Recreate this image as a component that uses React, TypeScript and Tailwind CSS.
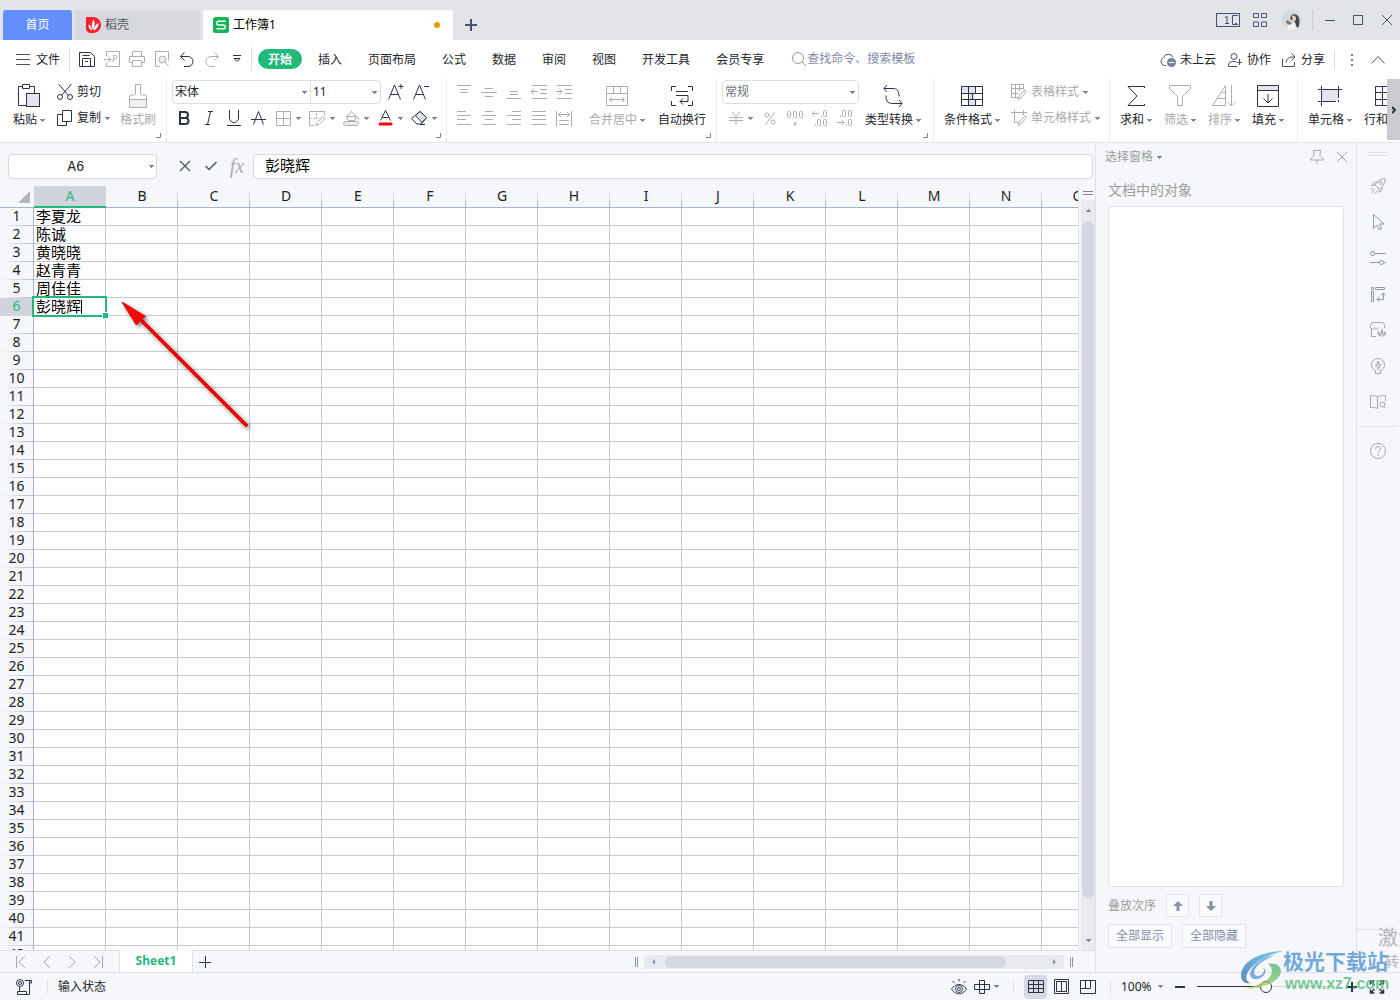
import React from "react";

const INK = "#2b3347";
const OFF = "#adadad";

type Kids = { children?: React.ReactNode };

function Svg({ w, h, c = INK, sw = 1, children, className = "" }: Kids & { w: number; h: number; c?: string; sw?: number; className?: string }) {
  return (
    <svg width={w} height={h} viewBox={`0 0 ${w} ${h}`} fill="none" stroke={c} strokeWidth={sw} className={`shrink-0 ${className}`} aria-hidden="true">
      {children}
    </svg>
  );
}

function Caret({ up = false }: { up?: boolean }) {
  return (
    <svg width="5" height="3" viewBox="0 0 5 3" shapeRendering="crispEdges" className="shrink-0" aria-hidden="true">
      <path d={up ? "M2 0h1v1H2zM1 1h3v1H1zM0 2h5v1H0z" : "M0 0h5v1H0zM1 1h3v1H1zM2 2h1v1H2z"} fill="#7b879f" />
    </svg>
  );
}

/* ---------- title bar ---------- */

function TitleBar() {
  return (
    <header className="flex h-10 shrink-0 bg-[#e3e4e8]">
      <nav className="flex items-end gap-[3px] pl-[3px]" aria-label="窗口标签">
        <button className="h-[30px] w-[69px] rounded-t-[3px] bg-[#628ffc] text-white">首页</button>
        <button className="flex h-[30px] w-[125px] items-center gap-1 rounded-t-[3px] bg-[#d8d9dd] pl-[11px] text-[#50545c]">
          <Svg w={15} h={16} c="none">
            <path d="M0 0h7a8 8 0 0 1 0 16H3L0 13z" fill="#f5222d" />
            <path d="M7.500 2.500c1.800 3 1.500 7-.5 10.500-1.800-3-1.800-7 .5-10.500zM2.500 7.500c2 .8 3.200 3 3.500 6C3.500 12.500 2.300 10.500 2.500 7.500zM12.500 6c.2 3.500-1.300 6-4.700 7.500C8 10 9.500 7.500 12.500 6z" fill="#fff" />
          </Svg>
          稻壳
        </button>
        <button className="flex h-[30px] w-[250px] items-center gap-1 rounded-t-[3px] bg-white pr-[13px] pl-[10px] text-black">
          <Svg w={16} h={16} c="#fff" sw={1.5}>
            <rect width="16" height="16" rx="2.500" fill="#14b755" stroke="none" />
            <path d="M12.500 4.300H5.200C3.300 4.300 3.300 8 5.200 8h5.600c1.900 0 1.900 3.800 0 3.800H3.500" />
          </Svg>
          <span className="flex-1 text-left">工作簿1</span>
          <span className="size-1.5 rounded-full bg-[#e69a0c]" />
        </button>
        <button className="flex h-[30px] w-[30px] items-center justify-center" aria-label="新建标签">
          <Svg w={12} h={12} c="#47536d" sw={2}><path d="M6 0v12M0 6h12" /></Svg>
        </button>
      </nav>
      <div className="ml-auto flex items-center pr-2">
        <button aria-label="窗口布局" className="mr-[13px]">
          <Svg w={24} h={14} c="#47536d"><rect x=".5" y=".5" width="23" height="13" /><path d="M9 4.500l2-1V11M9 10.500h4M22 2.500h-5.500v9H22M19 10.500h2" /></Svg>
        </button>
        <button aria-label="应用" className="mr-[15px]">
          <Svg w={14} h={14} c="#47536d"><path d="M.5.500h5v4h-5zM8.500.500h5v4h-5zM.5 9h5v4.500h-5zM8.500 9h5v4.500h-5z" /></Svg>
        </button>
        <button aria-label="账户" className="mr-[10px]">
          <Svg w={20} h={20} c="none">
            <circle cx="10" cy="10" r="10" fill="#cfdbe0" />
            <path d="M9 6c2-3 7-2 8 2 .8 4 .3 7-1 10-2-1-2-4-3-6L8 9z" fill="#45444c" />
            <path d="M10 6c2-1 4 0 4 2.500S12 12 10.500 11z" fill="#e6cbbd" />
            <path d="M5 19c0-4 3-6 7-6l2 5c-2 2-6 2.500-9 1z" fill="#f6f1f1" />
            <path d="M5 10l5 3-2 2-4-2z" fill="#8b6f70" />
          </Svg>
        </button>
        <span className="h-5 w-px bg-[#cdced3]" />
        <button aria-label="最小化" className="ml-3"><Svg w={10} h={10} c="#47536d"><path d="M0 5.500h10" /></Svg></button>
        <button aria-label="最大化" className="ml-[18px]"><Svg w={10} h={10} c="#47536d"><rect x=".5" y=".5" width="9" height="9" /></Svg></button>
        <button aria-label="关闭" className="ml-[19px]"><Svg w={10} h={10} c="#47536d"><path d="M0 0l10 10M10 0L0 10" /></Svg></button>
      </div>
    </header>
  );
}

/* ---------- menu bar ---------- */

function QuickIcon({ label, children }: Kids & { label: string }) {
  return <button aria-label={label} className="flex h-6 w-[25px] items-center justify-center">{children}</button>;
}

function MenuBar() {
  const tabs = ["插入", "页面布局", "公式", "数据", "审阅", "视图", "开发工具", "会员专享"];
  return (
    <div className="flex h-[38px] shrink-0 items-center bg-white text-[#24262b]">
      <button className="ml-4 flex items-center gap-1.5 pt-0.5">
        <Svg w={14} h={12} c="#4a5060"><path d="M0 .500h14M0 5.500h14M0 10.500h14" /></Svg>
        文件
      </button>
      <span className="mr-1 ml-[9px] h-6 w-px bg-[#dcdde1]" />
      <QuickIcon label="保存">
        <Svg w={16} h={15}><path d="M.5.500h11l4 4v10h-15zM3.500 14.500v-8h8v8M3.500 3.500h7M6 9.500h3" /></Svg>
      </QuickIcon>
      <QuickIcon label="输出为PDF">
        <Svg w={16} h={16} c={OFF}><path d="M2.500 5V.500h13v15h-13V12M0 8.500h7M4 5.500l3 3-3 3M8 11c2-1 1.500-4 1.500-6.500h2c2 0 2 3.500-.5 3.500H9" /></Svg>
      </QuickIcon>
      <QuickIcon label="打印">
        <Svg w={16} h={16} c={OFF}><path d="M3.500 5V.500h9V5M3.500 11.500h-3v-6h15v6h-3M3.500 9.500h9v6h-9z" /></Svg>
      </QuickIcon>
      <QuickIcon label="打印预览">
        <Svg w={16} h={16} c={OFF}><path d="M6 15.500H1.500V.500h13v9" /><circle cx="8.500" cy="8.500" r="3.500" fill="#ececec" /><path d="M11 11l4 4.500" /></Svg>
      </QuickIcon>
      <QuickIcon label="撤销">
        <Svg w={14} h={15}><path d="M4.500.500l-4 4 4 4M.500 4.500H8a5 5 0 0 1 0 10H4" /></Svg>
      </QuickIcon>
      <QuickIcon label="恢复">
        <Svg w={14} h={15} c={OFF}><path d="M9.500.500l4 4-4 4M13.500 4.500H6a5 5 0 0 0 0 10h4" /></Svg>
      </QuickIcon>
      <QuickIcon label="更多">
        <Svg w={8} h={8}><path d="M0 .500h8M1 3.500h6l-3 3z" /></Svg>
      </QuickIcon>
      <span className="mr-1.5 ml-0.5 h-6 w-px bg-[#dcdde1]" />
      <button className="h-5 w-11 rounded-full bg-[#21b97c] leading-[22px] font-bold text-white">开始</button>
      <nav className="ml-4 flex gap-[26px] pt-0.5" aria-label="功能区">
        {tabs.map((t) => <button key={t} className="whitespace-nowrap">{t}</button>)}
      </nav>
      <label className="ml-7 flex items-center gap-px">
        <Svg w={14} h={14} c="#8e98b4"><circle cx="6" cy="6" r="5.500" /><path d="M10 10l4 4" /></Svg>
        <input aria-label="搜索" placeholder="查找命令、搜索模板" className="w-28 bg-transparent outline-none placeholder:text-[#7f89a6]" />
      </label>
      <div className="ml-auto flex items-center whitespace-nowrap pt-0.5">
        <button className="flex items-center gap-1">
          <Svg w={16} h={14} c="#4a5468"><path d="M6 12.500H4.500a4 4 0 0 1-1-7.700 5 5 0 0 1 9.500-.3" /><circle cx="11.500" cy="9.500" r="4.500" fill="#77809a" stroke="none" /><path d="M9 9.500h5" stroke="#fff" /></Svg>
          未上云
        </button>
        <button className="ml-3 flex items-center gap-[5px]">
          <Svg w={14} h={14} c="#4a5468"><circle cx="6" cy="3.500" r="3" /><path d="M8 8.500H4a3.500 3.500 0 0 0-3.500 3.500v1.500H9M11.500 6v6M8.500 9.500h5.500" /></Svg>
          协作
        </button>
        <button className="ml-[11px] flex items-center gap-[5px]">
          <Svg w={14} h={14} c="#4a5468"><path d="M.5 6v7.500h12V9M9.500.500l3.500 3.500-3.500 3.500M13 4h-3C6.500 4 4.500 6 4 9.500" /></Svg>
          分享
        </button>
        <span className="ml-[9px] h-5 w-px bg-[#dcdde1]" />
        <button aria-label="更多" className="ml-4"><Svg w={2} h={12} c="none"><path d="M0 0h2v2H0zM0 5h2v2H0zM0 10h2v2H0z" fill="#737b8e" /></Svg></button>
        <button aria-label="折叠" className="mr-[15px] ml-[18px]"><Svg w={14} h={8} c="#4a5468"><path d="M.5 7.500l6.500-7 6.500 7" /></Svg></button>
      </div>
    </div>
  );
}

/* ---------- ribbon ---------- */

function Group({ children, className, mark = false, bar = true }: Kids & { className: string; mark?: boolean; bar?: boolean }) {
  return (
    <div className={`flex shrink-0 flex-col pt-0.5 ${bar ? "border-r border-[#ebecef]" : ""} ${className}`}>
      <div className="flex h-[52px]">{children}</div>
      {mark && (
        <button aria-label="对话框启动器" className="mr-[5px] mt-px self-end">
          <Svg w={5} h={5} c="#7b879f"><path d="M0 4.500h4.500V0" /></Svg>
        </button>
      )}
    </div>
  );
}

function Big({ label, icon, off = false, caret = true, className = "" }: { label: string; icon: React.ReactNode; off?: boolean; caret?: boolean; className?: string }) {
  return (
    <button className={`flex shrink-0 flex-col items-center ${off ? "text-[#a9a9a9]" : "text-[#24262b]"} ${className}`}>
      <span className="flex h-8 items-center">{icon}</span>
      <span className="flex items-center gap-[3px] leading-4 whitespace-nowrap">{label}{caret && <Caret />}</span>
    </button>
  );
}

function Tool({ label, children, caret = false }: Kids & { label: string; caret?: boolean }) {
  return (
    <button aria-label={label} className="flex h-6 items-center">
      <span className="flex w-[25px] justify-center">{children}</span>
      {caret && <span className="flex w-[9px]"><Caret /></span>}
    </button>
  );
}

function Lines({ rows }: { rows: [number, number, number][] }) {
  return <Svg w={16} h={14} c={OFF}>{rows.map(([x, y, l], i) => <path key={i} d={`M${x} ${y + 0.5}h${l}`} />)}</Svg>;
}

function Picker({ label, value, className }: { label: string; value: string; className: string }) {
  return (
    <label className={`flex h-6 items-center border border-[#dcdee3] bg-white pr-[3px] ${className}`}>
      <select aria-label={label} className="h-full min-w-0 flex-1 appearance-none bg-transparent px-0.5 outline-none">
        <option>{value}</option>
      </select>
      <Caret />
    </label>
  );
}

function Ribbon() {
  return (
    <div className="flex h-16 shrink-0 bg-white">
      <div className="flex min-w-0 flex-1 overflow-hidden">
        <Group className="w-[167px]" mark>
          <Big className="ml-[13px]" label="粘贴" icon={
            <Svg w={22} h={24}><path d="M8 21.500H.5v-19h4M11.500 2.500h5V9M4.500.500h7v4h-7z" /><rect x="8.500" y="9.500" width="13" height="13" fill="#e3e5ea" /></Svg>} />
          <div className="ml-3 flex flex-col gap-0.5">
            <button className="flex h-6 items-center gap-1 whitespace-nowrap">
              <Svg w={16} h={16}><path d="M1.500 0l10 11.500M14.500 0l-10 11.500" /><circle cx="3" cy="13" r="2.500" /><circle cx="13" cy="13" r="2.500" /></Svg>剪切
            </button>
            <button className="flex h-6 items-center gap-1 whitespace-nowrap">
              <Svg w={16} h={16}><path d="M5.500.500h9v11h-9zM5 4.500H.5v11h9V12" /></Svg>复制<Caret />
            </button>
          </div>
          <Big className="ml-[10px]" label="格式刷" off caret={false} icon={
            <Svg w={18} h={24} c={OFF}><path d="M1 15.500h16V23H1z" fill="#f0f0f0" stroke="none" /><path d="M6.500 9.500V.500h5v9l1 1.500h4l1 1v11.500H.5V12l1-1h4zM.5 15.500h17" /></Svg>} />
        </Group>

        <Group className="w-[280px]" mark>
          <div className="ml-[5px] flex flex-col gap-0.5">
            <div className="flex">
              <Picker label="字体" value="宋体" className="w-[139px] rounded-l-sm" />
              <Picker label="字号" value="11" className="-ml-px w-[71px] rounded-r-sm" />
              <div className="ml-0.5 flex">
                <Tool label="增大字号"><Svg w={16} h={16}><path d="M.5 15.500L6.500 1l6 14.500M2.500 10.500h8M10.500 2.500h5M13 0v5" /></Svg></Tool>
                <Tool label="减小字号"><Svg w={16} h={16}><path d="M.5 15.500L6.500 1l6 14.500M2.500 10.500h8M11 2.500h5" /></Svg></Tool>
              </div>
            </div>
            <div className="-ml-px flex">
              <Tool label="加粗"><Svg w={12} h={14} sw={2}><path d="M2 1h5a3 3 0 0 1 0 6H2zM2 7h5.500a3 3 0 0 1 0 6H2z" /></Svg></Tool>
              <Tool label="倾斜"><Svg w={8} h={14}><path d="M3 .500h5M0 13.500h5M5.500.500l-3 13" /></Svg></Tool>
              <Tool label="下划线"><Svg w={14} h={16}><path d="M2.500 0v8a4.500 4.500 0 0 0 9 0V0M0 15.500h14" /></Svg></Tool>
              <Tool label="删除线"><Svg w={15} h={14}><path d="M2.500 13.500L7.500.500l5 13M0 8.500h15" /></Svg></Tool>
              <Tool label="边框" caret><Svg w={15} h={15} c={OFF}><path d="M.5.500h14v14H.5zM7.500 0v15M0 7.500h15" /></Svg></Tool>
              <Tool label="绘图边框" caret><Svg w={17} h={15} c={OFF}><path d="M15.500 4V.500H.5v14H5M.5 7.500h2M4.500 7.500h2M8.500 7.500h1M7.500 2.500v2M7.500 6v2M14 5.500l2 2-6 6-3 1 1-3z" /></Svg></Tool>
              <Tool label="填充颜色" caret><Svg w={17} h={15} c={OFF}><path d="M3.500 5.500l5-4.500 5 4.500-2 4h-6zM3.500 5.500h10M8.500 1V0M13.500 5.500c1.500 1 2 2 2 4" /><rect x=".5" y="10.500" width="15" height="4" rx="2" fill="#ececec" /></Svg></Tool>
              <Tool label="字体颜色" caret><Svg w={15} h={16}><path d="M2.500 10.500L7.500 .500l5 10M4.500 7.500h6" /><path d="M2 14h11" stroke="#f00" strokeWidth="3" strokeLinecap="round" /></Svg></Tool>
              <Tool label="清除" caret><Svg w={17} h={14}><path d="M9 .500l6.500 6-5 6.500H6L.5 7.500zM9 13.500h5" /><path d="M9 .500l6.500 6-4.500 5L4.500 4.500z" fill="#e3e5ea" /></Svg></Tool>
            </div>
          </div>
        </Group>

        <Group className="w-[270px]" mark>
          <div className="ml-1 flex flex-col gap-0.5">
            <div className="flex">
              <Tool label="顶端对齐"><Lines rows={[[1, 0, 14], [4, 4, 8], [4, 7, 8]]} /></Tool>
              <Tool label="垂直居中"><Lines rows={[[4, 3, 8], [0, 7, 16], [4, 11, 8]]} /></Tool>
              <Tool label="底端对齐"><Lines rows={[[4, 6, 8], [4, 9, 8], [1, 13, 14]]} /></Tool>
              <Tool label="减少缩进"><Svg w={16} h={14} c={OFF}><path d="M1 .500h15M9 4.500h7M9 8.500h7M1 13.500h15M0 6.500h7M3 3.500l-3 3 3 3" /></Svg></Tool>
              <Tool label="增加缩进"><Svg w={16} h={14} c={OFF}><path d="M1 .500h15M9 4.500h7M9 8.500h7M1 13.500h15M0 6.500h6M3 3.500l3 3-3 3" /></Svg></Tool>
            </div>
            <div className="flex">
              <Tool label="左对齐"><Lines rows={[[1, 0, 9], [1, 4, 14], [1, 8, 9], [1, 13, 14]]} /></Tool>
              <Tool label="居中"><Lines rows={[[4, 0, 8], [1, 4, 14], [4, 8, 8], [1, 13, 14]]} /></Tool>
              <Tool label="右对齐"><Lines rows={[[6, 0, 9], [1, 4, 14], [6, 8, 9], [1, 13, 14]]} /></Tool>
              <Tool label="两端对齐"><Lines rows={[[1, 0, 14], [1, 4, 14], [1, 8, 14], [1, 13, 14]]} /></Tool>
              <Tool label="分散对齐"><Svg w={16} h={15} c={OFF}><path d="M.5 0v15M15.500 0v15M3 9.500h10M3 13.500h10M2.500 3.500h11M5 1L2.500 3.500 5 6M11 1l2.500 2.500L11 6" /></Svg></Tool>
            </div>
          </div>
          <Big className="ml-[13px]" label="合并居中" off icon={
            <Svg w={22} h={20} c={OFF}><path d="M.5.500h21v19H.5zM.5 7.500h21M7.500 0v7M14.500 0v7M3.500 13.500h15M6 11l-2.500 2.500L6 16M16 11l2.500 2.500L16 16" /></Svg>} />
          <Big className="ml-[13px]" label="自动换行" caret={false} icon={
            <Svg w={22} h={20}><path d="M5 .500H.5V5M17 .500h4.500V5M5 19.500H.5V15M17 19.500h4.500V15M5 5.500h12M5 9.500h12v6H9M12 12.500l-3 3 3 3" /></Svg>} />
        </Group>

        <Group className="w-[217px]" mark>
          <div className="ml-[5px] flex flex-col gap-0.5 text-[#70747c]">
            <Picker label="数字格式" value="常规" className="w-[137px] rounded-sm" />
            <div className="ml-px flex">
              <Tool label="货币" caret><Svg w={14} h={14} c={OFF}><path d="M2.500.500L7 5.500 11.500.500M0 6.500h14M0 9.500h14M7 6v8" /></Svg></Tool>
              <Tool label="百分比"><Svg w={12} h={13} c={OFF}><path d="M10.500.500l-9 12" /><circle cx="3" cy="3" r="2" /><circle cx="9" cy="10" r="2" /></Svg></Tool>
              <Tool label="千位分隔"><Svg w={16} h={15} c={OFF}><rect x=".5" y=".5" width="3" height="6" rx="1" /><rect x="6.500" y=".5" width="3" height="6" rx="1" /><rect x="12.500" y=".5" width="3" height="6" rx="1" /><path d="M8.500 11v1.500L7 14.500" strokeWidth="1.500" /></Svg></Tool>
              <Tool label="增加小数位"><Svg w={16} h={16} c={OFF}><path d="M0 3.500h7M2.500 1L0 3.500 2.500 6M9.500 5.500v1.500M3.500 14v1.500" /><rect x="11.500" y=".5" width="3" height="6" rx="1" /><rect x="5.500" y="9.500" width="3" height="6" rx="1" /><rect x="11.500" y="9.500" width="3" height="6" rx="1" /></Svg></Tool>
              <Tool label="减少小数位"><Svg w={16} h={16} c={OFF}><path d="M3.500 5.500V7M0 12.500h7M4.500 10L7 12.500 4.500 15M9.500 14v1.500" /><rect x="5.500" y=".5" width="3" height="6" rx="1" /><rect x="11.500" y=".5" width="3" height="6" rx="1" /><rect x="11.500" y="9.500" width="3" height="6" rx="1" /></Svg></Tool>
            </div>
          </div>
          <Big className="ml-1.5" label="类型转换" icon={
            <Svg w={20} h={22}><path d="M4 0L1 3.500 4 7M1 3.500h9c4 0 6 2 6 8M16 22l3-3.500L16 15M19 18.500h-9c-4 0-7-1-7-8" /></Svg>} />
        </Group>

        <Group className="w-[176px]">
          <Big className="ml-[10px]" label="条件格式" icon={
            <Svg w={22} h={20}><path d="M1 1h13v6H1zM7 13h7v6H7zM7 7h7v6H7z" fill="#e3e5ea" stroke="none" /><path d="M.5.500h21v19H.5zM0 7.500h22M0 13.500h22M14.500 0v7M7.500 0v20M14.500 13v7M11.500 7v6" /></Svg>} />
          <div className="ml-[11px] flex flex-col gap-0.5 text-[#a9a9a9]">
            <button className="flex h-6 items-center gap-1 whitespace-nowrap">
              <Svg w={16} h={16} c={OFF}><path d="M7 13.500H.5V.500h12V5M0 4.500h12.500M0 9.500h7M4.500 0v13M8.500 0v7M14 6l1.500 1.500-5 6-3 2 .5-3.500z" /></Svg>表格样式<Caret />
            </button>
            <button className="flex h-6 items-center gap-1 whitespace-nowrap">
              <Svg w={16} h={16} c={OFF}><path d="M3.500 0v12.500H7M0 2.500h16M12.500 0v5M14 6l1.500 1.500-5 6-3 2 .5-3.500z" /></Svg>单元格样式<Caret />
            </button>
          </div>
        </Group>

        <Group className="w-[188px]">
          <div className="ml-[10px] flex gap-3">
            <Big label="求和" icon={<Svg w={18} h={22}><path d="M17.500 3V1.500H1L10 11 1 20.500h16.500V19" /></Svg>} />
            <Big label="筛选" off icon={<Svg w={22} h={22} c={OFF}><path d="M.5.500h21v3l-8 8v9h-5v-9l-8-8z" /></Svg>} />
            <Big label="排序" off icon={<Svg w={24} h={22} c={OFF}><path d="M13.500.500v20H.5zM10.500 7.500h3M6 13.500h7.500M19.500 0v20.500M15.500 17l4 4 4-4" /></Svg>} />
            <Big label="填充" icon={<Svg w={22} h={22}><path d="M1 1h20v4H1z" fill="#e3e5ea" stroke="none" /><path d="M.5.500h21v21H.5zM0 5.500h22M11 9v9M6.500 13.500L11 18l4.500-4.500" /></Svg>} />
          </div>
        </Group>

        <Group className="w-[110px]" bar={false}>
          <Big className="ml-[10px]" label="单元格" icon={
            <Svg w={24} h={20}><path d="M4 4h16v11H4z" fill="#e3e5ea" stroke="none" /><path d="M3.500 0v20M20.500 0v12M0 3.500h24M0 15.500h18M20.500 14v2" /></Svg>} />
          <Big className="ml-3" label="行和列" icon={
            <Svg w={22} h={20}><path d="M.5.500h21v19H.5zM7.500 0v20M0 6.500h22M0 13.500h22" /></Svg>} />
        </Group>
      </div>
      <button aria-label="向右滚动" className="mt-px mb-0.5 flex w-[13px] shrink-0 items-center justify-center bg-[#cacbd1]">
        <Svg w={4} h={8} sw={2}><path d="M0 1l3 3-3 3" /></Svg>
      </button>
    </div>
  );
}

/* ---------- sheet ---------- */

function FormulaBar() {
  return (
    <div className="flex h-[43px] shrink-0 items-start pt-[11px] pr-0.5 pl-2">
      <label className="flex h-[25px] w-[149px] items-center rounded-sm border border-[#d6d9e0] bg-white pr-0.5">
        <input aria-label="名称框" defaultValue="A6" className="min-w-0 flex-1 pr-1.5 text-center font-['Liberation_Mono',monospace] text-sm outline-none" />
        <Caret />
      </label>
      <button aria-label="取消" className="ml-[22px] flex h-6 w-3 items-center"><Svg w={12} h={12} c="#4a5468"><path d="M1 1l10 10M11 1L1 11" strokeWidth="1.300" /></Svg></button>
      <button aria-label="输入" className="ml-[14px] flex h-6 w-3 items-center"><Svg w={12} h={10} c="#4a5468" sw={1.5}><path d="M.500 5l3.500 3.500L11.500 1" /></Svg></button>
      <button aria-label="插入函数" className="ml-[10px] h-6 w-5 font-['Liberation_Serif',serif] text-xl leading-6 text-[#a9abb0] italic">fx</button>
      <input aria-label="编辑栏" defaultValue="彭晓辉" className="ml-1.5 h-[25px] min-w-0 flex-1 rounded-sm border border-[#d6d9e0] bg-white pb-1 pl-[11px] text-[15px] text-black outline-none" />
    </div>
  );
}

const COLS = "ABCDEFGHIJKLMNO".split("");
const NAMES = ["李夏龙", "陈诚", "黄晓晓", "赵青青", "周佳佳", "彭晓辉"];

function Sheet() {
  return (
    <div className="relative min-w-0 flex-1 overflow-hidden border-r border-[#dfe1e6]">
      <table className="w-[1114px] table-fixed border-separate border-spacing-0 text-sm text-[#1c1e22]">
        <thead>
          <tr className="h-[22px]">
            <th className="w-[34px] border-b border-[#a9b3cc] bg-[#f5f7fa] p-0">
              <Svg w={12} h={12} c="none" className="ml-[18px]"><path d="M12 0v12H0z" fill="#b4b5b8" /></Svg>
            </th>
            {COLS.map((c, i) => (
              <th key={c} scope="col" className={`p-0 pb-px font-normal leading-[18px] ${i === 0 ? "border-b-2 border-[#21b97c] bg-[#d1d4dc] text-[#21b97c]" : "border-b border-[#a9b3cc] bg-[linear-gradient(to_bottom,#f5f7fa,#a9b3cc)] bg-[length:1px_100%] bg-right bg-no-repeat"}`}>{c}</th>
            ))}
          </tr>
        </thead>
        <tbody>
          {Array.from({ length: 42 }, (_, r) => (
            <tr key={r} className="h-[18px] leading-[17px]">
              <th scope="row" className={`border-r border-[#a9b3cc] p-0 pb-0.5 leading-4 font-normal ${r === 5 ? "bg-[#d1d4dc] text-[#21b97c]" : "bg-[linear-gradient(to_right,#f5f7fa,#b4bcd0)] bg-[length:100%_1px] bg-bottom bg-no-repeat"}`}>{r + 1}</th>
              {COLS.map((c, i) => (
                <td key={c} className="relative border-r border-b border-[#c5cad9] bg-white p-0 pl-0.5 text-[15px] whitespace-nowrap text-black">
                  {i === 0 ? NAMES[r] : null}
                  {i === 0 && r === 5 && (
                    <span className="absolute -top-0.5 -right-0.5 -bottom-0.5 -left-0.5 z-10 border-2 border-[#21b97c]">
                      <span className="absolute top-0.5 bottom-px left-[47px] w-px bg-black" />
                      <span className="absolute -right-[3px] -bottom-[3px] size-[6px] border-t border-l border-white bg-[#21b97c]" />
                    </span>
                  )}
                </td>
              ))}
            </tr>
          ))}
        </tbody>
      </table>
      <svg width="150" height="150" viewBox="0 0 150 150" className="absolute top-[109px] left-[115px] z-20 drop-shadow-[2px_2px_2px_rgba(0,0,0,0.55)]" aria-hidden="true">
        <path d="M7 7L30.500 21.500 26.500 23.500 133 130 131 132 24.500 25.500 21.500 30z" fill="#f00" stroke="#e00000" strokeWidth="1" strokeLinejoin="round" />
      </svg>
    </div>
  );
}

function VerticalScroll() {
  return (
    <div className="ml-0.5 flex w-[14px] shrink-0 flex-col">
      <div className="flex h-[14px] items-center justify-center"><Svg w={10} h={4} c="#7b879f"><path d="M0 .500h10M0 3.500h10" /></Svg></div>
      <div className="flex flex-1 flex-col items-center bg-[#e8eaf0]">
        <button aria-label="向上滚动" className="flex h-[21px] items-center"><Caret up /></button>
        <div className="min-h-0 w-3 flex-1 rounded-full bg-[#d4d7df]" />
        <button aria-label="向下滚动" className="flex h-[52px] items-end pb-2"><Caret /></button>
      </div>
    </div>
  );
}

function SheetTabs() {
  return (
    <div className="flex h-[22px] shrink-0 items-center border-t border-[#dfe1e6]">
      <div className="flex items-center gap-[17px] pl-4">
        <button aria-label="首个工作表"><Svg w={10} h={12} c="#a3a6ad"><path d="M.5 0v12M9 0L3 6l6 6" /></Svg></button>
        <button aria-label="上一个工作表"><Svg w={8} h={12} c="#a3a6ad"><path d="M7 0L1 6l6 6" /></Svg></button>
        <button aria-label="下一个工作表"><Svg w={8} h={12} c="#a3a6ad"><path d="M1 0l6 6-6 6" /></Svg></button>
        <button aria-label="末个工作表"><Svg w={10} h={12} c="#a3a6ad"><path d="M9.500 0v12M1 0l6 6-6 6" /></Svg></button>
      </div>
      <button className="-mt-px ml-4 h-[22px] w-[74px] border-x border-[#dfe1e6] bg-white text-center font-bold text-[#21b97c]">Sheet1</button>
      <button aria-label="新建工作表" className="ml-1.5"><Svg w={12} h={12}><path d="M6.500 0v12M0 6.500h12" /></Svg></button>
      <div className="ml-auto flex items-center pr-[22px]">
        <Svg w={3} h={10} c="#8b93a8"><path d="M.5 0v10M2.500 0v10" /></Svg>
        <div className="mx-1.5 flex h-[14px] w-[420px] items-center bg-[#e8eaf0] px-2">
          <Svg w={3} h={6} c="none"><path d="M3 0v6L0 3z" fill="#8593b0" /></Svg>
          <div className="ml-[10px] h-3 w-[341px] rounded-full bg-[#d4d7df]" />
          <Svg w={3} h={6} c="none" className="ml-auto"><path d="M0 0v6L3 3z" fill="#8593b0" /></Svg>
        </div>
        <Svg w={3} h={10} c="#8b93a8"><path d="M.5 0v10M2.500 0v10" /></Svg>
      </div>
    </div>
  );
}

/* ---------- right side ---------- */

function SelectionPane() {
  const small = "flex size-[23px] items-center justify-center border border-[#e3e5ea] bg-[#fafbfc]";
  const wide = "h-6 border border-[#e3e5ea] bg-[#fafbfc] px-[7px] leading-5 text-[#8390a8]";
  return (
    <aside className="flex w-[262px] shrink-0 flex-col border-x border-[#dfe1e6] px-3 text-[#9c9c9c]">
      <div className="-ml-[3px] flex h-7 items-center">
        <button className="flex items-center gap-1">选择窗格<Caret /></button>
        <button aria-label="固定" className="ml-auto"><Svg w={14} h={14} c="#a3a6ad"><path d="M3.500.500h7l-.5 5 3.500 3.500v1H.5V9L4 5.500zM7 10v4" /></Svg></button>
        <button aria-label="关闭窗格" className="mr-[-3px] ml-[13px]"><Svg w={10} h={10} c="#a3a6ad"><path d="M0 0l10 10M10 0L0 10" /></Svg></button>
      </div>
      <h2 className="mt-[7px] h-7 text-sm leading-6">文档中的对象</h2>
      <div className="min-h-0 flex-1 rounded-sm border border-[#dfe1e6] bg-white" />
      <div className="mt-[7px] flex items-center">
        叠放次序
        <button aria-label="上移" className={`ml-[10px] ${small}`}><Svg w={10} h={10} c="none"><path d="M5 0l5 5H6.500v5h-3V5H0z" fill="#8390a8" /></Svg></button>
        <button aria-label="下移" className={`ml-[10px] ${small}`}><Svg w={10} h={10} c="none"><path d="M5 10l5-5H6.500V0h-3v5H0z" fill="#8390a8" /></Svg></button>
      </div>
      <div className="mt-[7px] mb-6 flex gap-[10px]">
        <button className={wide}>全部显示</button>
        <button className={wide}>全部隐藏</button>
      </div>
    </aside>
  );
}

function SideStrip() {
  const g = "#a3a6ad";
  const b = "#8f97ab";
  const items: [string, React.ReactNode][] = [
    ["快捷", <Svg w={16} h={16} c={g}><path d="M5 7c2-4 5-6 10-6.500C15 6 12.500 9 9 11zM5 7l4 4M5 7L1.500 7.500 4 4.500l3-.500M9 11v3.500L12 12v-3M2.500 10L.500 12M5 11l-3.500 4M7 13l-2 2.500" /><circle cx="10.500" cy="5" r="1.500" /></Svg>],
    ["选择", <Svg w={14} h={16} c={b}><path d="M2.500.500v14l3.500-3.500 2 4.500 2.500-1-2-4.500h4.500z" /></Svg>],
    ["属性", <Svg w={16} h={14} c={b}><circle cx="2.500" cy="2.500" r="2" /><circle cx="11.500" cy="11.500" r="2" /><path d="M5 2.500h11M0 11.500h9M14 11.500h2" /></Svg>],
    ["透视", <Svg w={16} h={15} c={b}><path d="M1.500.500h2v2h-2zM5.500.500h9v2h-9zM1.500 4.500h2v10h-2zM7 12.500h6.500V6M9.500 10L7 12.500 9.500 15M11 8.500L13.500 6 16 8.500" /></Svg>],
    ["稻壳资源", <Svg w={16} h={16} c={g}><path d="M1.500 7v7.500H6M.5 6V3.500a3 3 0 0 1 3-3h8a3 3 0 0 1 3 3V6M.5 5.500c.5 2 3.500 2 4 0 .5 2 3.500 2 4 0" /><path d="M12 6c2 3 1.500 5 0 9-2-3-2-6 0-9zM7.500 9c2 0 3 2 4 6-3 0-4.500-3-4-6zM16 9c-2 0-3 2-4 6 3 0 4.500-3 4-6z" fill={g} stroke="#f5f7fa" strokeWidth=".5" /></Svg>],
    ["灵感", <Svg w={14} h={16} c={g}><path d="M4.500 12.500C2 11.500.500 9.500.500 7a6.500 6.500 0 0 1 13 0c0 2.500-1.500 4.500-4 5.500v3h-5zM7.500 3l-3 5h2.500v3.500L10 6.500H7.500z" /></Svg>],
    ["查阅", <Svg w={16} h={14} c={g}><path d="M7.500 1.500v12M.5.500c3 0 5 0 7 1.500 2-1.500 5-1.500 8-1.500V6M.5.500v12c3 0 5 0 7 1" /><circle cx="12.500" cy="9.500" r="2.500" /><path d="M14 11.500l2 2" /></Svg>],
  ];
  return (
    <aside className="flex w-[43px] shrink-0 flex-col items-center pr-0.5">
      <div className="mt-[9px] h-1 w-5 border-y border-[#dfe1e6]" />
      <div className="mt-3 flex flex-col">
        {items.map(([label, icon]) => <button key={label} aria-label={label} className="flex h-9 w-8 items-center justify-center">{icon}</button>)}
      </div>
      <span className="mt-1.5 h-px w-[38px] bg-[#dfe1e6]" />
      <button aria-label="帮助" className="mt-4">
        <Svg w={16} h={16} c={g}><circle cx="8" cy="8" r="7.500" /><path d="M5.500 6a2.500 2.500 0 1 1 3.500 2.200c-1 .5-1 1-1 2M8 11.500v1.500" /></Svg>
      </button>
      <span className="mt-auto mb-[42px] h-px w-full bg-[#dfe1e6]" />
    </aside>
  );
}

/* ---------- status bar ---------- */

function StatusBar() {
  return (
    <footer className="flex h-7 shrink-0 items-center border-t border-[#dfe1e6] text-[#24262b]">
      <button aria-label="宏" className="ml-4"><Svg w={16} h={16}><circle cx="4" cy="4" r="3.500" /><circle cx="4" cy="4" r="1.500" /><path d="M9 1.500h6.500V4H13M13.500 1.500V15.500h-12v-3h9v3M3.500 8v4" /></Svg></button>
      <span className="ml-[15px] h-[14px] w-px bg-[#dfe1e6]" />
      <span className="ml-[10px]">输入状态</span>
      <div className="ml-auto flex items-center">
        <button aria-label="护眼模式"><Svg w={16} h={16} c="#3d4558"><path d="M.5 10c4-6 11-6 15 0-4 6.500-11 6.500-15 0zM8 0v2.500M1.500 2l2 2M14.500 2l-2 2" /><circle cx="8" cy="10" r="3.500" /><circle cx="8" cy="10" r="1.500" /></Svg></button>
        <button aria-label="阅读模式" className="ml-[7px] flex items-center gap-1"><Svg w={16} h={14}><path d="M5.500.500h5v13h-5zM.5 4.500h15v5H.5zM5.500 4v6M10.500 4v6" /></Svg><Caret /></button>
        <span className="ml-[14px] h-[14px] w-px bg-[#dfe1e6]" />
        <button aria-label="普通视图" className="ml-[10px] flex h-6 w-[23px] items-center justify-center rounded-sm bg-[#d6dae2]"><Svg w={16} h={13}><path d="M.5.500h15v12H.5zM0 4.500h16M0 8.500h16M5.500 0v13M10.500 0v13" /></Svg></button>
        <button aria-label="分页预览" className="ml-[7px]"><Svg w={15} h={15}><path d="M.5.500h14v14H.5zM2.500 2.500h10v10h-10zM7.500 2v11" /></Svg></button>
        <button aria-label="页面布局" className="ml-[11px]"><Svg w={16} h={14}><path d="M.5.500h15v13H.5zM5.500 0v8M10.500 0v8M0 8.500h10.500" /></Svg></button>
        <span className="ml-[14px] h-[14px] w-px bg-[#dfe1e6]" />
        <button className="ml-[10px] flex w-[42px] items-center justify-between whitespace-nowrap">100%<Caret /></button>
        <button aria-label="缩小" className="ml-3"><Svg w={10} h={10} sw={2}><path d="M0 5h10" /></Svg></button>
        <input aria-label="缩放" type="range" defaultValue={50} className="mx-3 h-3 w-[138px] appearance-none bg-[linear-gradient(to_right,#2b3347_50%,#cfd3db_50%)] bg-[length:100%_1px] bg-center bg-no-repeat [&::-webkit-slider-thumb]:size-3 [&::-webkit-slider-thumb]:appearance-none [&::-webkit-slider-thumb]:rounded-full [&::-webkit-slider-thumb]:border [&::-webkit-slider-thumb]:border-[#2b3347] [&::-webkit-slider-thumb]:bg-white" />
        <button aria-label="放大"><Svg w={10} h={10} sw={2}><path d="M0 5h10M5 0v10" /></Svg></button>
        <button aria-label="全屏" className="mr-[15px] ml-3"><Svg w={16} h={14} sw={1.5}><path d="M5.500 1H1.500v3.500M10.500 1h4v3.500M5.500 13h-4V9.500M10.500 13h4V9.500M2 1.500l3.500 3.500M14 1.500L10.500 5M2 12.500L5.500 9M14 12.500L10.500 9" /></Svg></button>
      </div>
    </footer>
  );
}

function Watermark() {
  return (
    <div className="pointer-events-none absolute right-0 bottom-0 z-30 h-20 w-[162px] overflow-hidden">
      <div className="absolute top-1 left-[140px] text-xl whitespace-nowrap text-[#b2b4b9]">激活 Windows</div>
      <div className="absolute top-[31px] left-[147px] text-sm whitespace-nowrap text-[#b2b4b9]">转到设置以激活 Windows。</div>
      <svg width="44" height="42" viewBox="0 0 44 42" className="absolute top-[30px] left-[2px] opacity-80" aria-hidden="true">
        <defs>
          <linearGradient id="sky" x1="0" y1="1" x2="1" y2="0"><stop offset="0" stopColor="#3271b8" /><stop offset="1" stopColor="#61c4ee" /></linearGradient>
          <linearGradient id="leaf" x1="1" y1="0" x2="0" y2="1"><stop offset="0" stopColor="#49b884" /><stop offset="1" stopColor="#c9d94f" /></linearGradient>
        </defs>
        <path d="M43 1C25 1 2 9 1 25c0 7 5 9 9 8-4-2-5-6-2-11C14 12 27 5 43 1z" fill="url(#sky)" />
        <path d="M36 5C24 9 15 16 14 22c0 4 4 5 7 3 3-2 4-5 2-7 4 1 3 6-1 9-6 4-12 2-12-3C11 16 22 7 36 5z" fill="#5b9bd8" />
        <path d="M28 14c10-2 15 4 12 11-4 8-16 13-36 14 12-3 23-7 27-14 2-5 0-9-3-11z" fill="url(#leaf)" />
      </svg>
      <div className="absolute top-[25px] left-[45px] text-[21px] leading-8 font-bold whitespace-nowrap text-[#4f93d2]/80">极光下载站</div>
      <div className="absolute top-[54px] left-[47px] font-['Liberation_Sans',sans-serif] text-base leading-5 font-bold text-[#56bd7b]/80">www.xz7.com</div>
    </div>
  );
}

export default function App() {
  return (
    <div className="relative flex h-screen flex-col overflow-hidden bg-[#f5f7fa] font-['Noto_Sans','Noto_Sans_CJK_SC',sans-serif] text-xs text-[#24262b]">
      <TitleBar />
      <MenuBar />
      <Ribbon />
      <main className="flex min-h-0 flex-1 border-t border-[#e2e4e8]">
        <div className="flex min-w-0 flex-1 flex-col">
          <FormulaBar />
          <div className="flex min-h-0 flex-1">
            <Sheet />
            <VerticalScroll />
          </div>
          <SheetTabs />
        </div>
        <SelectionPane />
        <SideStrip />
      </main>
      <StatusBar />
      <Watermark />
    </div>
  );
}
